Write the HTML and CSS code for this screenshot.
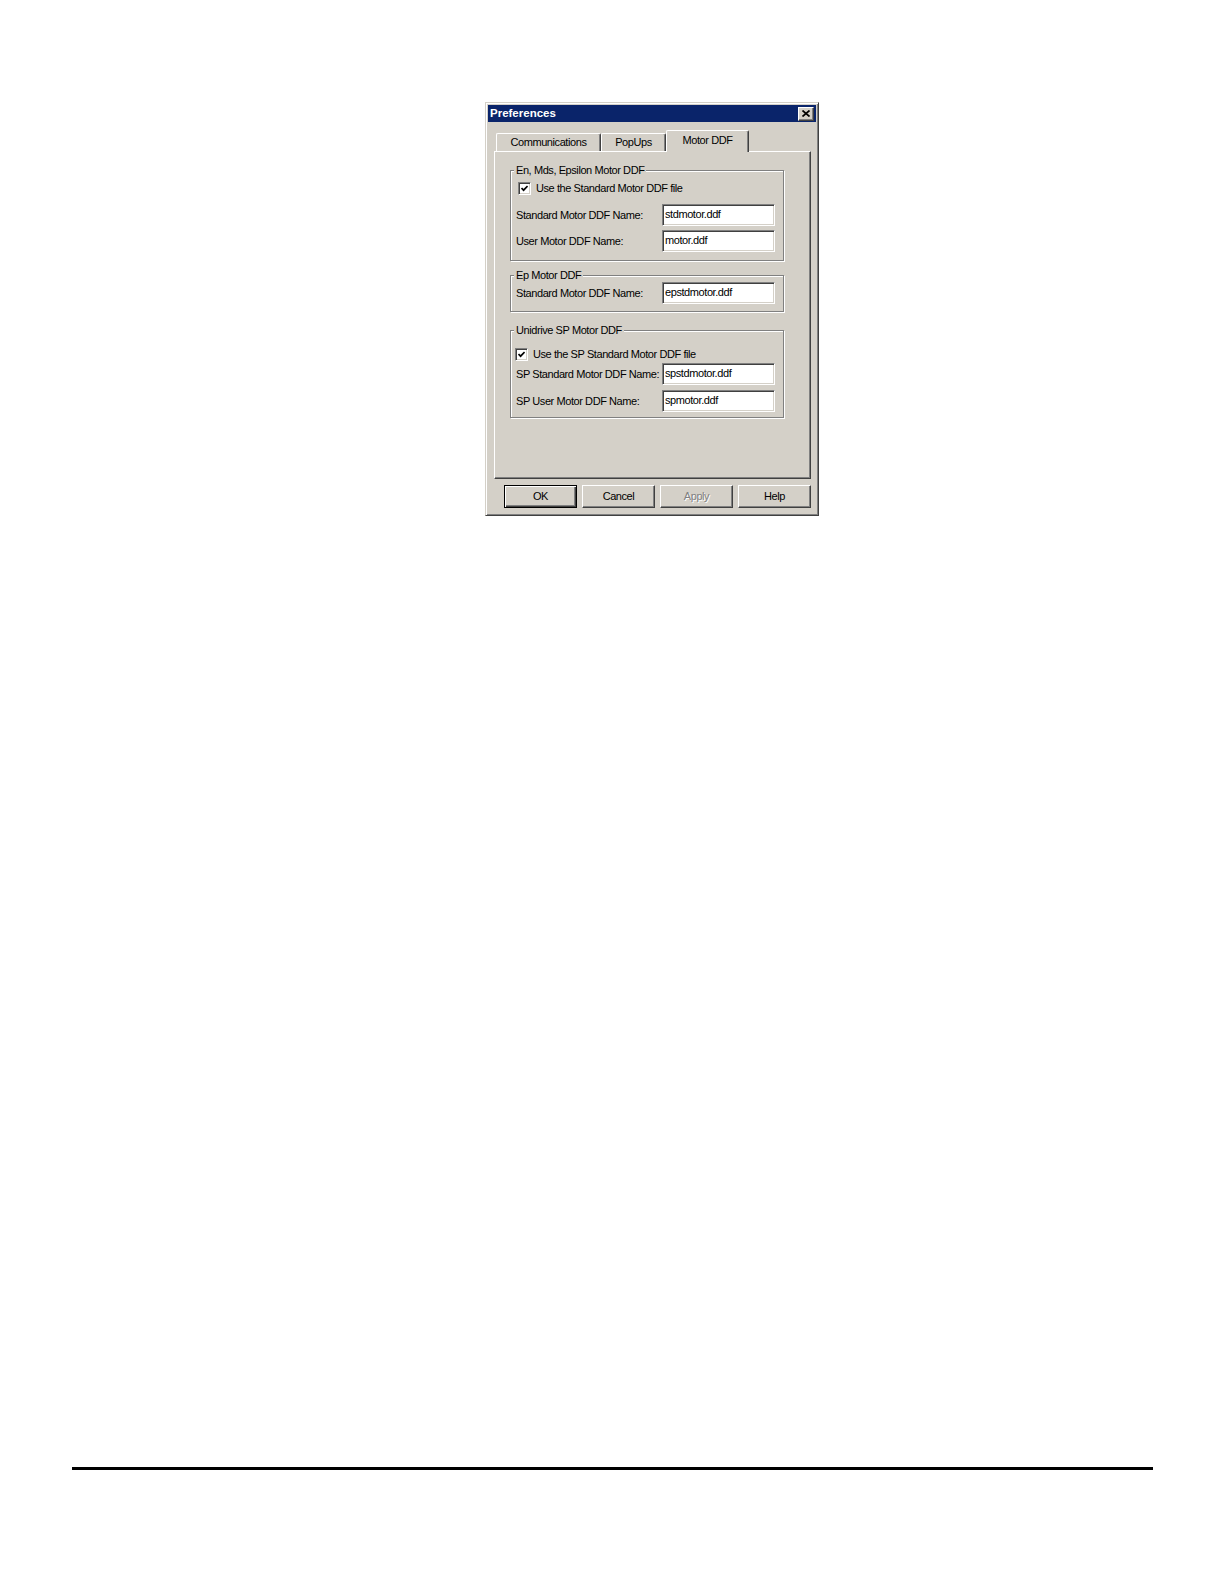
FILE: index.html
```html
<!DOCTYPE html>
<html lang="en">
<head>
<meta charset="utf-8">
<title>Preferences</title>
<link rel="stylesheet" href="styles.css">
</head>
<body>
<div class="page">
  <div class="dialog">
    <div class="titlebar">
      <span class="title">Preferences</span>
      <span class="close-btn">
        <svg width="8" height="7" viewBox="0 0 8 7"><path d="M0.5 0.5 L7.5 6.5 M7.5 0.5 L0.5 6.5" stroke="#000" stroke-width="1.7" fill="none"/></svg>
      </span>
    </div>
    <div class="tabs">
      <div class="tab tab-comm">Communications</div>
      <div class="tab tab-popups">PopUps</div>
      <div class="tab tab-active">Motor DDF</div>
    </div>
    <div class="panel">
      <div class="group group-en">
        <div class="legend">En, Mds, Epsilon Motor DDF</div>
        <div class="check-row check-en">
          <span class="checkbox"><svg width="7" height="7" viewBox="0 0 7 7"><path d="M0.5 3 L2.6 5.2 L6.6 1" stroke="#000" stroke-width="1.7" fill="none"/></svg></span>
          <span>Use the Standard Motor DDF file</span>
        </div>
        <div class="field-row row-first">
          <span class="field-label">Standard Motor DDF Name:</span>
          <input class="field-input" type="text" value="stdmotor.ddf" readonly>
        </div>
        <div class="field-row row-next">
          <span class="field-label">User Motor DDF Name:</span>
          <input class="field-input" type="text" value="motor.ddf" readonly>
        </div>
      </div>
      <div class="group group-ep">
        <div class="legend">Ep Motor DDF</div>
        <div class="field-row">
          <span class="field-label">Standard Motor DDF Name:</span>
          <input class="field-input" type="text" value="epstdmotor.ddf" readonly>
        </div>
      </div>
      <div class="group group-sp">
        <div class="legend">Unidrive SP Motor DDF</div>
        <div class="check-row check-sp">
          <span class="checkbox"><svg width="7" height="7" viewBox="0 0 7 7"><path d="M0.5 3 L2.6 5.2 L6.6 1" stroke="#000" stroke-width="1.7" fill="none"/></svg></span>
          <span>Use the SP Standard Motor DDF file</span>
        </div>
        <div class="field-row row-sp-first">
          <span class="field-label">SP Standard Motor DDF Name:</span>
          <input class="field-input" type="text" value="spstdmotor.ddf" readonly>
        </div>
        <div class="field-row row-sp-next">
          <span class="field-label">SP User Motor DDF Name:</span>
          <input class="field-input" type="text" value="spmotor.ddf" readonly>
        </div>
      </div>
    </div>
    <div class="buttons">
      <div class="btn btn-default">OK</div>
      <div class="btn">Cancel</div>
      <div class="btn btn-disabled">Apply</div>
      <div class="btn">Help</div>
    </div>
  </div>
  <div class="rule"></div>
</div>
</body>
</html>
```
FILE: styles.css
```css
html, body {
  margin: 0;
  padding: 0;
  background: #fff;
}

.page {
  padding-top: 102px;
  height: 1584px;
  box-sizing: border-box;
  font-family: "Liberation Sans", Arial, sans-serif;
  font-size: 11px;
  letter-spacing: -0.42px;
  color: #000;
}

.dialog {
  width: 334px;
  box-sizing: border-box;
  margin-left: 485px;
  background: #d4d0c8;
  border: 1px solid;
  border-color: #d4d0c8 #404040 #404040 #d4d0c8;
  box-shadow: inset 1px 1px #fff, inset -1px -1px #808080;
  padding: 2px;
}

.titlebar {
  display: flex;
  align-items: center;
  justify-content: space-between;
  height: 17px;
  padding: 0 2px;
  background: #0a246a;
  color: #fff;
}

.title {
  font-weight: bold;
  font-size: 11.5px;
  letter-spacing: 0;
  line-height: 13px;
}

.close-btn {
  width: 16px;
  height: 14px;
  box-sizing: border-box;
  background: #d4d0c8;
  border: 1px solid;
  border-color: #fff #404040 #404040 #fff;
  box-shadow: inset -1px -1px #808080;
  display: flex;
  align-items: center;
  justify-content: center;
}

.close-btn svg {
  display: block;
}

.tabs {
  display: flex;
  align-items: flex-end;
  height: 22px;
  margin: 8px 0 -1px 8px;
}

.tab {
  flex: none;
  box-sizing: border-box;
  height: 18px;
  margin-bottom: 1px;
  padding-top: 2px;
  line-height: 13px;
  text-align: center;
  background: #d4d0c8;
  border-top: 1px solid #fff;
  border-left: 1px solid #fff;
  border-right: 1px solid #404040;
  border-radius: 2px 2px 0 0;
  box-shadow: inset -1px 0 #808080;
}

.tab-comm {
  width: 105px;
}

.tab-popups {
  width: 65px;
}

.tab-active {
  width: 83px;
  height: 22px;
  margin-bottom: 0;
  padding-top: 3px;
  position: relative;
  z-index: 1;
}

.panel {
  width: 317px;
  height: 328px;
  box-sizing: border-box;
  margin-left: 6px;
  border: 1px solid;
  border-color: #fff #404040 #404040 #fff;
  box-shadow: inset -1px -1px #808080;
  padding: 18px 0 0 15px;
}

.group {
  width: 274px;
  box-sizing: border-box;
  border: 1px solid #808080;
  box-shadow: inset 1px 1px #fff, 1px 1px #fff;
  padding-left: 5px;
}

.group-en {
  padding-bottom: 8px;
}

.group-ep {
  margin-top: 14px;
  padding-bottom: 7px;
}

.group-sp {
  margin-top: 18px;
  padding-bottom: 5px;
}

.legend {
  width: fit-content;
  margin: -7px 0 0 -2px;
  padding: 0 2px;
  line-height: 13px;
  background: #d4d0c8;
}

.check-row {
  display: flex;
  align-items: center;
  gap: 5px;
  height: 14px;
  line-height: 13px;
}

.check-en {
  margin-top: 4px;
  margin-left: 2px;
}

.check-sp {
  margin-top: 10px;
  margin-left: -1px;
}

.checkbox {
  width: 13px;
  height: 13px;
  box-sizing: border-box;
  background: #fff;
  border: 1px solid;
  border-color: #808080 #fff #fff #808080;
  box-shadow: inset 1px 1px #404040, inset -1px -1px #d4d0c8;
  display: flex;
  align-items: center;
  justify-content: center;
}

.checkbox svg {
  display: block;
}

.field-row {
  display: grid;
  grid-template-columns: 146px 113px;
  align-items: center;
  height: 22px;
}

.row-first {
  margin-top: 9px;
}

.row-next {
  margin-top: 4px;
}

.row-sp-first {
  margin-top: 2px;
}

.row-sp-next {
  margin-top: 5px;
}

.field-label {
  white-space: nowrap;
  line-height: 13px;
  padding-top: 1px;
}

.field-input {
  width: 113px;
  height: 22px;
  box-sizing: border-box;
  margin: 0;
  padding: 0 2px 2px 2px;
  font: inherit;
  letter-spacing: inherit;
  color: #000;
  background: #fff;
  border: 1px solid;
  border-color: #808080 #fff #fff #808080;
  box-shadow: inset 1px 1px #404040, inset -1px -1px #d4d0c8;
  outline: none;
}

.buttons {
  display: flex;
  justify-content: flex-end;
  gap: 5px;
  width: 317px;
  margin: 6px 0 5px 6px;
}

.btn {
  width: 73px;
  height: 23px;
  box-sizing: border-box;
  background: #d4d0c8;
  border: 1px solid;
  border-color: #fff #404040 #404040 #fff;
  box-shadow: inset -1px -1px #808080;
  display: flex;
  align-items: center;
  justify-content: center;
  line-height: 13px;
}

.btn-default {
  border-color: #000;
  box-shadow: inset 1px 1px #fff, inset -1px -1px #404040, inset -2px -2px #808080;
}

.btn-disabled {
  color: #808080;
  text-shadow: 1px 1px #fff;
}

.rule {
  margin: 951px 0 0 72px;
  width: 1081px;
  height: 3px;
  background: #000;
}
```
